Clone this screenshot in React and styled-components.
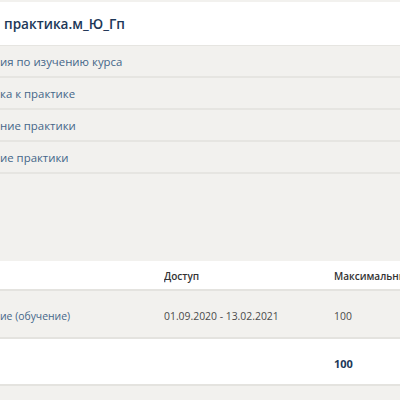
import React from 'react';
import styled, { createGlobalStyle } from 'styled-components';

const GlobalStyle = createGlobalStyle`
  html, body {
    margin: 0;
    padding: 0;
    background: #f2f1ee;
    font-family: 'Open Sans', 'Liberation Sans', sans-serif;
  }
`;

const Page = styled.div`
  width: 400px;
  height: 400px;
  overflow: hidden;
  background: #f2f1ee;
  padding-top: 2px;
  box-sizing: border-box;
`;

const Header = styled.div`
  height: 43px;
  display: flex;
  align-items: center;
  padding-left: 4px;
  background: #fff;
  border-bottom: 1px solid #e6e5e1;
`;

const Title = styled.h2`
  margin: 0;
  font-size: 13.6px;
  font-weight: 600;
  color: #1d3858;
`;

const SectionList = styled.ul`
  list-style: none;
  margin: 0;
  padding: 0;
`;

const SectionItem = styled.li`
  height: 32px;
  display: flex;
  align-items: center;
  padding-top: 1px;
  box-sizing: border-box;
  border-bottom: 2px solid #e6e5e1;
`;

const SectionLink = styled.a`
  font-size: 11.4px;
  color: #446689;
  text-decoration: none;
  white-space: nowrap;
`;

const Spacer = styled.div`
  height: ${({ $h }) => $h}px;
`;

const Table = styled.div`
  display: grid;
  grid-template-columns: 164px 170px 1fr;
`;

const Row = styled.div`
  display: contents;
`;

const Cell = styled.div`
  height: ${({ $h }) => $h}px;
  display: flex;
  align-items: center;
  box-sizing: border-box;
  padding-top: ${({ $pt }) => $pt || 0}px;
  background: ${({ $bg }) => $bg};
  border-bottom: 2px solid #e4e3df;
  font-size: ${({ $size }) => $size || 10.4}px;
  white-space: nowrap;
  overflow: hidden;
  color: ${({ $color }) => $color || '#4a4a4a'};
  font-weight: ${({ $weight }) => $weight || 400};
`;

const sections = [
  'ия по изучению курса',
  'ка к практике',
  'ние практики',
  'ие практики',
];

export default function App() {
  return (
    <Page>
      <GlobalStyle />
      <Header>
        <Title>практика.м_Ю_Гп</Title>
      </Header>
      <SectionList>
        {sections.map((s) => (
          <SectionItem key={s}>
            <SectionLink href="#">{s}</SectionLink>
          </SectionItem>
        ))}
      </SectionList>
      <Spacer $h={87} />
      <Table>
        <Row>
          <Cell $h={30} $pt={2} $bg="#fff" />
          <Cell $h={30} $pt={2} $bg="#fff" $weight={600} $size={10} $color="#333">Доступ</Cell>
          <Cell $h={30} $pt={2} $bg="#fff" $weight={600} $size={10} $color="#333">Максимальный балл</Cell>
        </Row>
        <Row>
          <Cell $h={48} $pt={4} $bg="#f2f1ee" $color="#446689">ие (обучение)</Cell>
          <Cell $h={48} $pt={4} $bg="#f2f1ee">01.09.2020 - 13.02.2021</Cell>
          <Cell $h={48} $pt={4} $bg="#f2f1ee">100</Cell>
        </Row>
        <Row>
          <Cell $h={47} $pt={4} $bg="#fff" />
          <Cell $h={47} $pt={4} $bg="#fff" />
          <Cell $h={47} $pt={4} $bg="#fff" $weight={700} $size={11} $color="#1d3858">100</Cell>
        </Row>
      </Table>
    </Page>
  );
}
